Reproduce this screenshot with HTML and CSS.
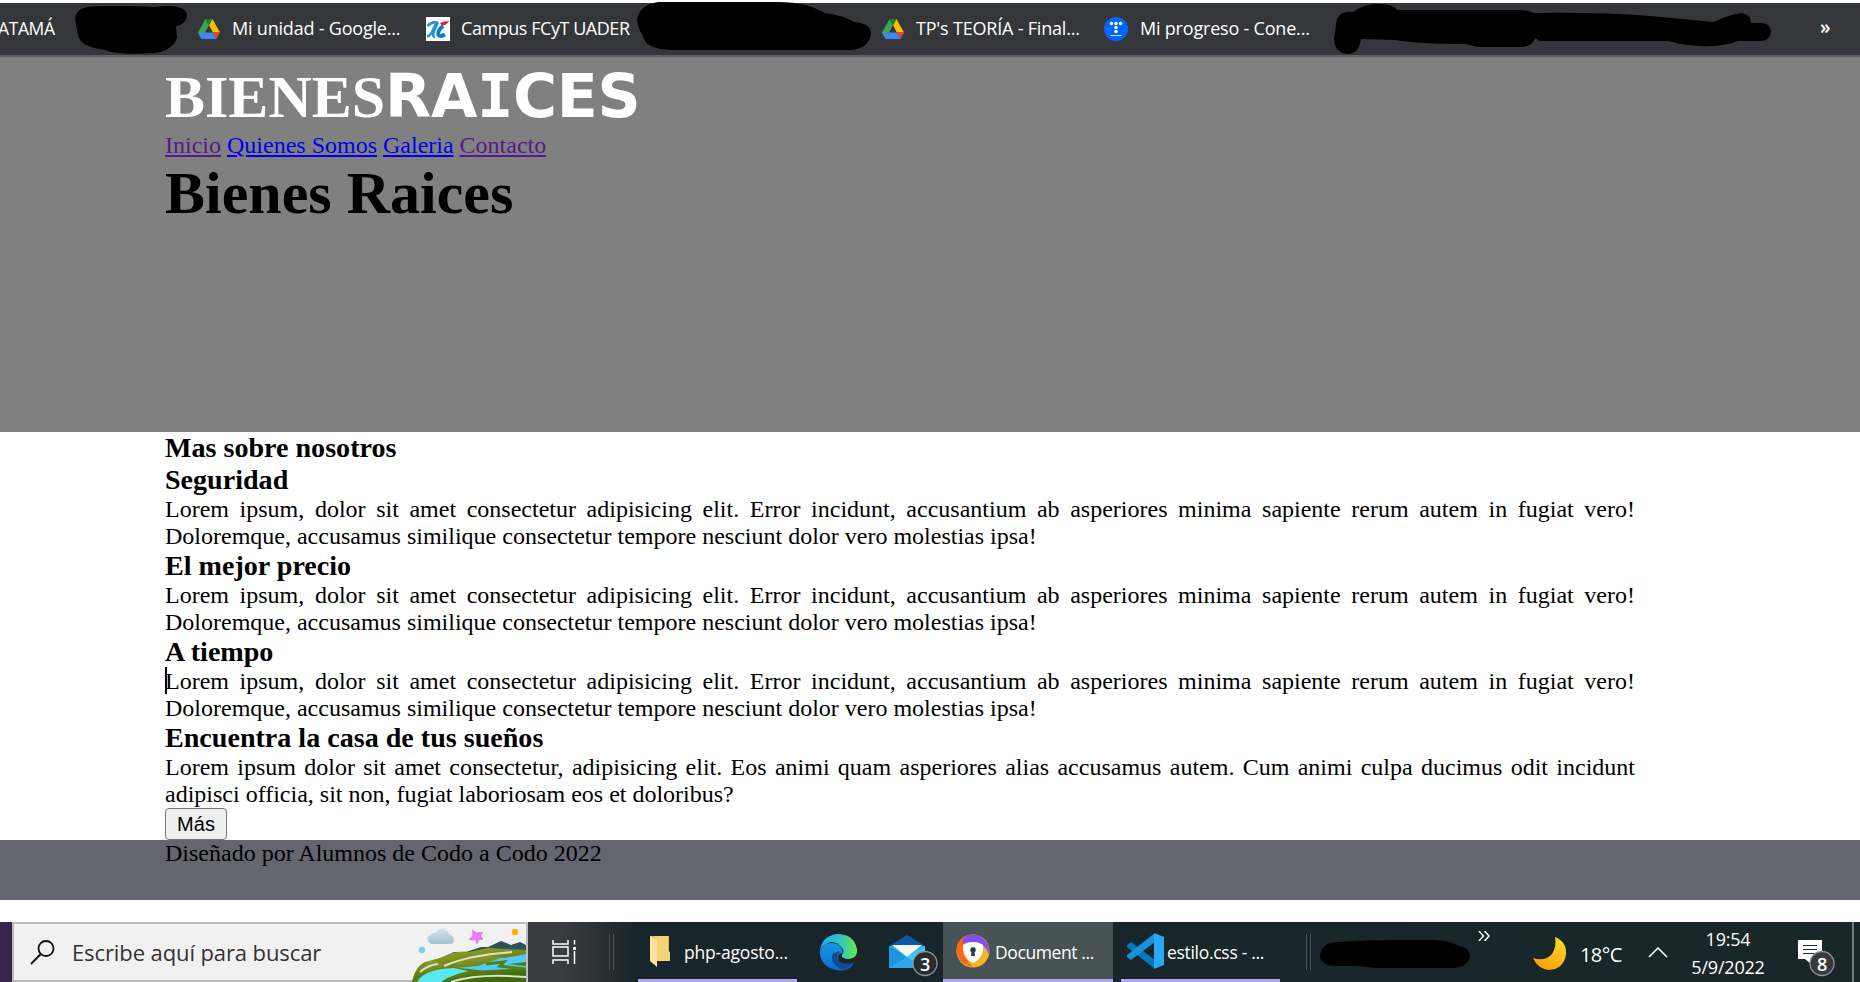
FILE: index.html
```html
<!DOCTYPE html>
<html lang="es">
<head>
<meta charset="utf-8">
<title>Document</title>
<link rel="stylesheet" href="styles.css">
</head>
<body>
<svg class="defs" width="0" height="0"><defs>
<symbol id="drive" viewBox="0 0 22 20"><path fill="#34a853" d="M7.5 0 0 13.4 3.5 20 11 6.5z"/><path fill="#188038" d="M7.5 0h7L11 6.5z"/><path fill="#fbbc04" d="M14.5 0 22 13.4h-7.3L11 6.5z"/><path fill="#35363a" d="m11 6.5 3.7 6.9H7.2z"/><path fill="#4285f4" d="M7.2 13.4h7.5L18.5 20h-15z"/><path fill="#4285f4" d="M0 13.4h7.2L3.5 20z"/><path fill="#ea4335" d="M14.7 13.4H22L18.5 20z"/></symbol>
</defs></svg>
<div class="bookmarks">
  <span class="bm bm-first">ATAMÁ</span>
  <span class="bm bm-drive"><svg width="22" height="20"><use href="#drive"/></svg><span class="t1">Mi unidad - Google...</span></span>
  <span class="bm bm-campus"><svg width="24" height="24" viewBox="0 0 24 24"><path fill="#fff" d="M0 0h24v24H0z"/><path d="M1.5 9Q7 4 10.500 5.500L6 15Q4 19 1 19.500M12 5 8 14Q6 20 9 20" fill="none" stroke="#2a93d8" stroke-width="2.600"/><path d="M17 9q-6 5-4.500 9 2 2 6.500-.5" fill="none" stroke="#0a7fca" stroke-width="4"/><path d="M14 6q4-2 9-2-2 4-7 5z" fill="#df2632"/></svg><span class="t2">Campus FCyT UADER</span></span>
  <span class="bm bm-tp"><svg width="22" height="20"><use href="#drive"/></svg><span class="t3">TP's TEORÍA - Final...</span></span>
  <span class="bm bm-prog"><svg width="24" height="24" viewBox="0 0 24 24"><circle cx="12" cy="12" r="12" fill="#0066ff"/><g fill="#fff"><circle cx="7.5" cy="6.5" r="1.7"/><circle cx="12" cy="6.5" r="1.7"/><circle cx="16.500" cy="6.5" r="1.7"/><circle cx="12" cy="10.5" r="1.7"/><circle cx="12" cy="14.500" r="1.7"/><path opacity=".8" d="M6.500 18h11v1h-11z"/></g></svg><span class="t4">Mi progreso - Cone...</span></span>
  <span class="bm bm-more">»</span>
  <svg class="ink" width="1860" height="57" viewBox="0 0 1860 57"><path d="M75 19Q76 9 87 7Q110 5 154 7Q184 3 187 14Q187 24 176 26L177 38Q172 51 154 53Q128 55 112 52L100 49Q80 46 78 35Z"/><path d="M637 20Q639 5 658 2H780Q806 2 825 13Q846 16 854 22Q871 23 871 34Q869 48 852 50H671Q645 49 643 36Q638 29 637 20Z"/><path d="M1337 19Q1341 10 1353 12Q1365 3 1380 4Q1392 4 1398 10H1521Q1528 10 1534 13Q1600 12 1650 16L1714 22Q1730 14 1742 13Q1751 15 1751 23H1762Q1771 24 1771 32Q1770 41 1760 41H1738Q1724 47 1700 46Q1680 45 1669 41H1540L1535 38Q1532 48 1518 47H1478L1465 44Q1420 44 1395 40L1361 39Q1359 54 1347 54Q1334 52 1334 38Z"/></svg>
</div>
<header class="hero">
  <div class="container">
    <h1 class="logo">BIENES<span>RA<span class="slab">I</span>CES</span></h1>
    <nav><a class="seen" href="#">Inicio</a> <a href="#">Quienes Somos</a> <a href="#">Galeria</a> <a class="seen" href="#">Contacto</a></nav>
    <h1 class="title">Bienes Raices</h1>
  </div>
</header>
<main class="container">
  <h3>Mas sobre nosotros</h3>
  <h3>Seguridad</h3>
  <p>Lorem ipsum, dolor sit amet consectetur adipisicing elit. Error incidunt, accusantium ab asperiores minima sapiente rerum autem in fugiat vero! Doloremque, accusamus similique consectetur tempore nesciunt dolor vero molestias ipsa!</p>
  <h3>El mejor precio</h3>
  <p>Lorem ipsum, dolor sit amet consectetur adipisicing elit. Error incidunt, accusantium ab asperiores minima sapiente rerum autem in fugiat vero! Doloremque, accusamus similique consectetur tempore nesciunt dolor vero molestias ipsa!</p>
  <h3>A tiempo</h3>
  <p class="caret">Lorem ipsum, dolor sit amet consectetur adipisicing elit. Error incidunt, accusantium ab asperiores minima sapiente rerum autem in fugiat vero! Doloremque, accusamus similique consectetur tempore nesciunt dolor vero molestias ipsa!</p>
  <h3>Encuentra la casa de tus sueños</h3>
  <p>Lorem ipsum dolor sit amet consectetur, adipisicing elit. Eos animi quam asperiores alias accusamus autem. Cum animi culpa ducimus odit incidunt adipisci officia, sit non, fugiat laboriosam eos et doloribus?</p>
  <button>Más</button>
</main>
<footer class="foot"><div class="container">Diseñado por Alumnos de Codo a Codo 2022</div></footer>
<div class="taskbar">
  <div class="search">
    <svg class="lens" width="25" height="25" viewBox="0 0 25 25" fill="none" stroke="#111" stroke-width="1.8"><circle cx="16" cy="8.5" r="7.5"/><path d="M10.8 14 1 24"/></svg>
    <span class="ts">Escribe aquí para buscar</span>
    <svg class="scene" width="118" height="60" viewBox="0 0 118 60">
      <defs>
        <linearGradient id="hill" x1="0" y1="0" x2=".5" y2="1"><stop stop-color="#a9ab2b"/><stop offset="1" stop-color="#3b6a08"/></linearGradient>
        <linearGradient id="mount" x1="0" y1="0" x2="0" y2="1"><stop stop-color="#244b5e"/><stop offset="1" stop-color="#3f6e50"/></linearGradient>
        <linearGradient id="cloud" x1="0" y1="0" x2="0" y2="1"><stop stop-color="#d5e2e9"/><stop offset="1" stop-color="#9fc3d5"/></linearGradient>
      </defs>
      <path fill="url(#cloud)" d="M23 22a5 5 0 0 1-1-9q2-3 6-2 2-5 8-4 4 1 5 5 5 2 5 6 0 4-4 4z"/>
      <path fill="#e87cf5" d="M65 9q3 3 5 2 3-1 4 0-3 3-1 4 1 2 2 2-4 0-5 1 0 3-1 3-1-4-2-4-3 1-5 0 4-3 3-4z" stroke="#e87cf5" stroke-width="1.500"/>
      <circle cx="107" cy="10" r="3.2" fill="#ffad08"/><circle cx="14" cy="28" r="3.2" fill="#6fd6e8"/>
      <path fill="url(#mount)" d="M28 38 46 30H58L73 25H80L93 19 103 23 112 20 118 23V45H28z"/>
      <path fill="url(#hill)" d="M4 60Q8 41 21 39L35 35Q50 28 62 30L80 26 118 28V60z"/>
      <path fill="#4ecbff" d="M50 42Q70 34 97 36L118 32V40L100 42 118 44V49L78 49 52 46z"/>
      <path fill="#58e9f5" d="M9 60Q16 47 46 46L60 49 37 60z"/>
      <path fill="url(#hill)" d="M33 60Q48 50 65 49L118 46V60zM55 37 77 33 93 36 70 44 47 46zM21 39q12-1 16 5L12 51z"/>
      <path d="M12 50Q20 43 30 42M36 44Q60 33 104 30M43 60Q70 51 118 55" fill="none" stroke="#e1ded0" stroke-width="2"/>
      <path d="M78 42 96 40 92 44 118 47" fill="none" stroke="#4f8212" stroke-width="3"/>
    </svg>
  </div>
  <svg class="view" width="24" height="24" viewBox="0 0 24 24" fill="none" stroke="#fff" stroke-width="1.5"><path d="M1 0v4h15V0M1 24v-4h15v4M1 7h15v9H1zM22.5 0v4.5M22.5 11v13"/><path d="M21 7h3v3h-3z" fill="#fff" stroke="none"/></svg>
  <i class="rails"></i>
  <div class="task php"><svg width="20" height="32" viewBox="0 0 20 32"><path fill="#e9bd56" d="M0 1h19v25H5z"/><path fill="#f5d376" d="M5 1h13v15l2 1v9H5z"/><path fill="#ffe4a0" d="M0 1 7 5v27l-7-6z"/></svg><span class="t5">php-agosto...</span></div>
  <svg class="edge" width="37" height="37" viewBox="0 0 37 37"><defs><linearGradient id="eg"><stop stop-color="#22a7ed"/><stop offset=".5" stop-color="#2dc5cd"/><stop offset="1" stop-color="#61e84a"/></linearGradient><linearGradient id="eb" x1="0" y1="0" x2="0" y2="1"><stop stop-color="#1c96e5"/><stop offset="1" stop-color="#0870cc"/></linearGradient></defs><path fill="url(#eb)" d="M0 18Q3 8 13 9 22 10 23 19q-7 0-4 8 5 8 15 3-8 9-18 6Q0 32 0 18z"/><path fill="#114a91" d="M14 17q-5 8 2 15 5 5 10 3 6-3 8-7-10 4-15-1-4-5 1-9-2-2-6 2z"/><path fill="url(#eg)" d="M0 18Q1 2 17 0q17 0 20 15 1 9-8 10-8 0-7-4 3-4 0-7-4-6-11-6Q2 10 0 18z"/></svg>
  <div class="mail"><svg width="49" height="43" viewBox="0 0 49 43"><path fill="#0c59a5" d="M0 12 18 1l18 11v6H0z"/><path fill="#2ba9ea" d="M0 12h36v22H0z"/><path fill="#1c94de" d="M0 12v22l18-11z"/><path fill="#40c8f5" d="M36 12v22L18 23z"/><path fill="#f4f6f8" d="M3 11h30L18 23z"/><circle cx="36" cy="29.5" r="12" fill="#252d30" stroke="#8b9294" stroke-width="1.3"/></svg><b>3</b></div>
  <div class="task doc"><svg width="34" height="34" viewBox="0 0 34 34"><circle cx="17" cy="17" r="16.5" fill="#f4b526"/><path fill="#fb6a10" d="M17 33Q1 30 .5 16 1 6 9 2 6 9 9 20q3 9 8 13z"/><path fill="#8051ef" d="M8 3Q20-3 29 6q5 6 4 14-5-12-16-12Q11 8 7 10 6 6 8 3z"/><path fill="#fff" d="M17 8q6 0 10 3 1 13-10 18Q6 24 7 11q5-3 10-3z"/><path fill="#283b4c" d="M17 13a3 3 0 0 1 1.5 5.500L19 22h-4l.5-3.500A3 3 0 0 1 17 13z"/></svg><span class="t6">Document ...</span></div>
  <div class="task code"><svg width="37" height="36" viewBox="0 0 37 36"><path fill="#0878bc" d="m0 12 4-3 24 18v9L0 14z"/><path fill="#1593dc" d="m0 24 4 3 24-18V0L0 22z"/><path fill="#29a9f2" d="m27 0 10 4v28l-10 4z"/></svg><span class="t7">estilo.css - ...</span></div>
  <i class="rails r2"></i>
  <svg class="blot" width="150" height="30" viewBox="0 0 150 30"><path d="M0 16Q2 2 18 2Q45 0 75 0h40q12 0 24 6 10 1 11 10-2 12-18 12H57L37 26H16Q1 26 0 16z"/></svg>
  <svg class="more" width="12" height="10" viewBox="0 0 12 10" fill="none" stroke="#fff" stroke-width="1.5"><path d="m1 0 4.5 5L1 10M6.5 0 11 5 6.5 10"/></svg>
  <svg class="moon" width="34" height="33" viewBox="0 0 34 33"><defs><linearGradient id="mg" x1="1" y1="0" x2=".3" y2="1"><stop stop-color="#ffdf28"/><stop offset="1" stop-color="#f7a00a"/></linearGradient></defs><path fill="url(#mg)" d="M22 0Q34 5 33 17 31 32 16 33 5 32 0 21q12 4 19-4 5-8 3-17z"/></svg>
  <span class="t8">18°C</span>
  <svg class="chev" width="20" height="11" viewBox="0 0 20 11" fill="none" stroke="#fff" stroke-width="1.5"><path d="m1 10 9-9 9 9"/></svg>
  <div class="clock"><span class="t9">19:54</span><span class="t10">5/9/2022</span></div>
  <div class="note"><svg width="38" height="38" viewBox="0 0 38 38"><path fill="#fff" d="M0 1h24v19H13v5l-6-5H0z"/><path stroke="#222d31" stroke-width="1.2" d="M5 6.5h14M5 10.5h14M5 14.5h14"/><circle cx="24" cy="24.5" r="12" fill="#343a3d" stroke="#8b9294" stroke-width="1.3"/></svg><b>8</b></div>
  <i class="end"></i>
</div>
</body>
</html>
```
FILE: styles.css
```css
* { box-sizing: border-box; margin: 0; padding: 0; }
body { width: 1860px; height: 982px; overflow: hidden; background: #fff; font: 24px/27px "Liberation Serif", "Times New Roman", serif; color: #000; }
svg { display: block; flex: none; }
.defs { position: absolute; }
.bookmarks { position: relative; display: flex; align-items: center; height: 57px; border-top: 3px solid #fff; border-bottom: 2px solid #5f5f65; background: #35363a; color: #fff; font: 18px/24px "Open Sans", sans-serif; letter-spacing: -.2px; white-space: nowrap; }
.bm { display: flex; align-items: center; flex: none; height: 24px; margin-top: -1px; }
.bm > span { margin-top: -2px; }
.bm-first { width: 198px; margin-left: -2px; font-size: 17.5px; letter-spacing: -.4px; padding-bottom: 2px; }
.bm-drive { width: 230px; gap: 12px; margin-left: 2px; }
.bm-campus { width: 454px; gap: 11px; margin-left: -2px; letter-spacing: -.45px; }
.bm-tp { width: 222px; gap: 12px; margin-left: 2px; }
.bm-prog { width: 716px; gap: 12px; }
.bm-more { font-weight: 600; margin-top: -5px; font-size: 19px; }
.ink { position: absolute; left: 0; top: -3px; }
.container { width: 1470px; margin-left: 165px; }
.hero { height: 375px; background: #808080; }
.logo { height: 75px; line-height: 78px; font-size: 60px; color: #fff; white-space: nowrap; }
.logo span { font-family: "DejaVu Sans", Verdana, sans-serif; letter-spacing: -.3px; }
.logo .slab { font-family: "DejaVu Sans Mono", Verdana, monospace; }
nav a { color: #00e; text-underline-offset: 2px; text-decoration-thickness: 2px; }
nav a.seen { color: #551a8b; }
.title { font-size: 60px; line-height: 69px; }
h3 { font-size: 28.08px; line-height: 32px; }
p { text-align: justify; }
.caret { position: relative; }
.caret::before { content: ""; position: absolute; left: 0; top: -1px; width: 2px; height: 27px; background: #000; }
button { display: block; width: 62px; height: 32px; border: 1.5px solid #767676; border-radius: 4px; background: #efefef; font: 20px/26px "Liberation Sans", Arial, sans-serif; }
.foot { height: 60px; background: #65656f; }
.taskbar { display: flex; align-items: flex-start; height: 60px; margin-top: 22px; border-left: 12px solid #35284a; background: linear-gradient(90deg, #3b3c40 516px, #3a3c40 550px, #18252a 625px, #19262a); color: #fff; font: 17.5px/24px "Open Sans", sans-serif; letter-spacing: -.2px; white-space: nowrap; }
.search { display: flex; flex: none; width: 516px; height: 60px; border: 2px solid #bdbdbd; background: #f1f1f1; color: #333; font-size: 22px; line-height: 57px; }
.lens { margin: 16px 17px 0 16px; }
.ts { width: 326px; letter-spacing: -.1px; }
.scene { margin: -2px 0 0 11px; }
.view { margin: 18px 0 0 24px; }
.rails { flex: none; width: 5px; height: 36px; margin: 12px 0 0 33px; border: solid #4a5356; border-width: 0 1px; }
.task { display: flex; align-items: center; flex: none; height: 60px; border-bottom: 3px solid #aaa6f0; }
.task span { margin-top: 3px; }
.php { width: 159px; padding-left: 12px; gap: 14px; margin-left: 24px; }
.edge { margin: 12px 0 0 23px; }
.mail { position: relative; flex: none; width: 49px; margin: 12px 0 0 32px; }
.mail b, .note b { position: absolute; font-size: 18px; font-weight: 600; }
.mail b { left: 31px; top: 18px; }
.doc { width: 170px; margin-left: 5px; padding-left: 13px; gap: 5px; background: #485355; letter-spacing: -.4px; }
.code { width: 159px; margin-left: 8px; padding-left: 6px; gap: 3px; letter-spacing: -.3px; }
.r2 { margin-left: 26px; }
.blot { margin: 18px 0 0 9px; }
.more { margin: 9px 0 0 8px; }
.moon { margin: 15px 0 0 43px; }
.t8 { flex: none; width: 81px; margin-top: 21px; padding-left: 13px; font-size: 20px; letter-spacing: -.6px; }
.chev { margin-top: 25px; }
.clock { display: flex; flex: none; flex-direction: column; align-items: center; width: 120px; margin-top: 3px; line-height: 28px; font-size: 18px; }
.note { position: relative; flex: none; width: 38px; margin: 17px 0 0 10px; }
.note b { left: 19px; top: 13px; }
.end { flex: none; margin-left: 16px; width: 2px; height: 60px; background: #737b7e; }
```
